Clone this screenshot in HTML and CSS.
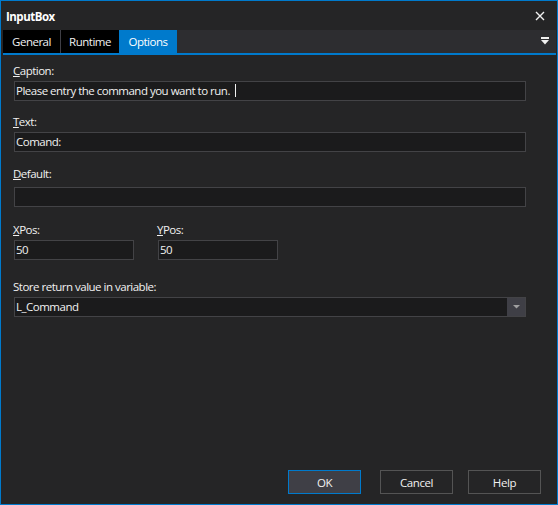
FILE: index.html
```html
<!DOCTYPE html>
<html lang="en">
<head>
    <meta charset="UTF-8">
    <title>InputBox</title>
    <link rel="stylesheet" href="styles.css">
</head>
<body>

<div class="window">
    <div class="titlebar">
        <span class="title">InputBox</span>
        <svg class="close" width="10" height="10" viewBox="0 0 10 10">
            <path d="M1 1 L9 9 M9 1 L1 9" stroke="#f1f1f1" stroke-width="1.4" fill="none"/>
        </svg>
    </div>

    <div class="tabstrip">
        <div class="tab tab-general">General</div>
        <div class="tab tab-runtime">Runtime</div>
        <div class="tab tab-options active">Options</div>
        <div class="tab-fill"></div>
        <svg class="tab-menu" width="8" height="8" viewBox="0 0 8 8">
            <rect x="0" y="0" width="8" height="2" fill="#f1f1f1"/>
            <path d="M0 3 L8 3 L4 7.5 Z" fill="#f1f1f1"/>
        </svg>
    </div>

    <div class="content">
        <div class="field f-caption">
            <label><u>C</u>aption:</label>
            <div class="i-box">Please entry the command you want to run. <span class="caret"></span></div>
        </div>

        <div class="field f-text">
            <label><u>T</u>ext:</label>
            <div class="i-box">Comand:</div>
        </div>

        <div class="field f-default">
            <label><u>D</u>efault:</label>
            <div class="i-box"></div>
        </div>

        <div class="field-row f-pos">
            <div class="field small">
                <label><u>X</u>Pos:</label>
                <div class="i-box">50</div>
            </div>
            <div class="field small">
                <label><u>Y</u>Pos:</label>
                <div class="i-box">50</div>
            </div>
        </div>

        <div class="field f-store">
            <label>Store return value in variable:</label>
            <div class="combo">
                <div class="combo-text">L_Command</div>
                <div class="combo-btn">
                    <svg width="7" height="4" viewBox="0 0 7 4">
                        <path d="M0 0 L7 0 L3.5 3.5 Z" fill="#a0a0a0"/>
                    </svg>
                </div>
            </div>
        </div>
    </div>

    <div class="buttons">
        <button class="btn btn-ok">OK</button>
        <button class="btn btn-cancel">Cancel</button>
        <button class="btn btn-help">Help</button>
    </div>
</div>

</body>
</html>
```

FILE: styles.css
```css
* {
    box-sizing: border-box;
}

body {
    margin: 0;
    padding: 0;
    background-color: #252526;
    font-family: "Open Sans", "Liberation Sans", sans-serif;
    font-size: 11.5px;
    letter-spacing: -0.5px;
    color: #f1f1f1;
}

.window {
    width: 558px;
    height: 505px;
    border: 1px solid #007acc;
    background-color: #252526;
    display: flex;
    flex-direction: column;
}

/* title bar */
.titlebar {
    height: 29px;
    display: flex;
    align-items: center;
    padding-left: 5px;
    padding-right: 12px;
}

.title {
    font-weight: bold;
    color: #ffffff;
    flex: 1;
    padding-top: 2px;
}

.close {
    display: block;
    margin-top: 1px;
}

/* tabs */
.tabstrip {
    height: 25px;
    margin: 0 1px 0 2px;
    background-color: #2d2d30;
    border-bottom: 2px solid #007acc;
    display: flex;
}

.tab {
    height: 23px;
    line-height: 24px;
    text-align: center;
    background-color: #000000;
    color: #f1f1f1;
}

.tab-general {
    border-right: 1px solid #3f3f46;
    width: 58px;
}

.tab-runtime {
    width: 58px;
}

.tab-options {
    width: 58px;
}

.tab.active {
    background-color: #007acc;
    color: #ffffff;
}

.tab-fill {
    flex: 1;
}

.tab-menu {
    display: block;
    margin: 7px 7px 0 0;
}

/* fields */
.content {
    padding-left: 12px;
    padding-top: 8px;
}

.field label {
    display: block;
    height: 15px;
    line-height: 16px;
    margin-bottom: 3px;
    color: #f1f1f1;
}

.field u {
    text-decoration: underline;
    text-underline-offset: 1px;
}

.i-box {
    margin-left: 1px;
    width: 512px;
    height: 20px;
    line-height: 18px;
    padding-left: 1px;
    background-color: #1b1b1c;
    border: 1px solid #434346;
    color: #f1f1f1;
    white-space: nowrap;
    overflow: hidden;
}

.caret {
    display: inline-block;
    width: 1px;
    height: 13px;
    margin-left: 3px;
    background-color: #f1f1f1;
    vertical-align: -2px;
}

.f-text {
    margin-top: 13px;
}

.f-default {
    margin-top: 14px;
}

.f-default label {
    margin-bottom: 6px;
}

.f-pos {
    margin-top: 15px;
    display: flex;
}

.field.small {
    width: 144px;
}

.field.small .i-box {
    width: 120px;
}

.f-store {
    margin-top: 19px;
}

/* combo box */
.combo {
    margin-left: 1px;
    width: 512px;
    height: 20px;
    border: 1px solid #434346;
    display: flex;
}

.combo-text {
    flex: 1;
    line-height: 18px;
    padding-left: 1px;
    background-color: #1b1b1c;
}

.combo-btn {
    width: 18px;
    background-color: #3f3f46;
    display: flex;
    align-items: center;
    justify-content: center;
}

.combo-btn svg {
    display: block;
}

/* buttons */
.buttons {
    margin-top: auto;
    display: flex;
    justify-content: flex-end;
    padding-right: 16px;
    padding-bottom: 10px;
}

.btn {
    width: 73px;
    height: 24px;
    font-family: "Open Sans", "Liberation Sans", sans-serif;
    font-size: 11.5px;
    letter-spacing: -0.4px;
    color: #f1f1f1;
    background-color: #252526;
    border: 1px solid #545454;
    padding: 0;
}

.btn-ok {
    background-color: #3f3f46;
    border-color: #007acc;
}

.btn-cancel {
    margin-left: 19px;
}

.btn-help {
    margin-left: 15px;
}
```
